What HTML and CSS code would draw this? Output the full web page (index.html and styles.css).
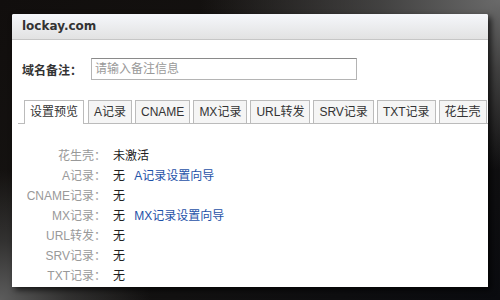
FILE: index.html
```html
<!DOCTYPE html>
<html lang="zh-CN">
  <head>
    <meta charset="UTF-8" />
    <title>lockay.com</title>
    <link rel="stylesheet" href="styles.css">
  </head>
  <body>
    <div class="dialog">
      <div class="dialog-title">lockay.com</div>

      <div class="dialog-body">
        <div class="form-row">
          <label for="remark">域名备注：</label>
          <input type="text" id="remark" placeholder="请输入备注信息" />
        </div>

        <!-- record tabs -->
        <ul class="tabs">
          <li class="active">设置预览</li>
          <li>A记录</li>
          <li>CNAME</li>
          <li>MX记录</li>
          <li>URL转发</li>
          <li>SRV记录</li>
          <li>TXT记录</li>
          <li>花生壳</li>
        </ul>

        <dl class="preview">
          <dt>花生壳：</dt>
          <dd>未激活</dd>
          <dt>A记录：</dt>
          <dd>无 <a href="#">A记录设置向导</a></dd>
          <dt>CNAME记录：</dt>
          <dd>无</dd>
          <dt>MX记录：</dt>
          <dd>无 <a href="#">MX记录设置向导</a></dd>
          <dt>URL转发：</dt>
          <dd>无</dd>
          <dt>SRV记录：</dt>
          <dd>无</dd>
          <dt>TXT记录：</dt>
          <dd>无</dd>
        </dl>
      </div>
    </div>
  </body>
</html>
```

FILE: styles.css
```css
html,
body {
  height: 100%;
}
body {
  margin: 0;
  overflow: hidden;
  font-family: "Liberation Sans", "Noto Sans CJK SC", sans-serif;
  font-size: 12px;
  color: #333;
  background:
    radial-gradient(ellipse 300px 170px at 100% 0%, #6a6a6a 0%, rgba(85, 85, 85, 0.7) 40%, rgba(40, 40, 40, 0) 100%),
    radial-gradient(ellipse 150px 130px at 0% 100%, #5c5c5c 0%, rgba(70, 70, 70, 0.6) 45%, rgba(30, 30, 30, 0) 100%),
    linear-gradient(to bottom right, #110e0d 0%, #161412 50%, #0a0b0f 100%);
}

.dialog {
  margin: 14px 0 0 12px;
  width: 476px;
  height: 273px;
  background: #fff;
  border-radius: 2px 2px 0 0;
  box-shadow: 3px 3px 6px rgba(0, 0, 0, 0.7);
  overflow: hidden;
}
.dialog-title {
  height: 25px;
  line-height: 25px;
  padding-left: 10px;
  font-family: "DejaVu Sans", sans-serif;
  font-weight: bold;
  font-size: 12px;
  color: #333;
  background: linear-gradient(#f5f7fb, #e2e2e2);
  border-bottom: 1px solid #c6c6c6;
}

.dialog-body {
  padding: 18px 0 0 6px;
}

.form-row {
  display: flex;
  align-items: center;
  padding-left: 4px;
}
.form-row label {
  width: 69px;
  font-weight: bold;
  color: #333;
}
.form-row input {
  box-sizing: border-box;
  width: 266px;
  height: 22px;
  padding: 0 3px;
  border: 1px solid #b4b4b4;
  border-top-color: #8a8a8a;
  font-family: inherit;
  font-size: 12px;
  outline: none;
}
.form-row input::placeholder {
  color: #999;
}

.tabs {
  display: flex;
  list-style: none;
  margin: 20px 0 0;
  padding: 0 0 0 6px;
  border-bottom: 1px solid #bbb;
}
.tabs li {
  height: 22px;
  line-height: 22px;
  padding: 0 5px;
  margin-right: 3px;
  margin-bottom: -1px;
  border: 1px solid #bbb;
  border-bottom: none;
  background: #f5f5f5;
  color: #333;
  white-space: nowrap;
}
.tabs li.active {
  background: #fff;
  height: 23px;
  margin-right: 4px;
}

.preview {
  display: grid;
  grid-template-columns: 88px auto;
  column-gap: 7px;
  margin: 22px 0 0;
  line-height: 20px;
}
.preview dt {
  text-align: right;
  color: #999;
}
.preview dd {
  margin: 0;
  color: #222;
}
.preview a {
  margin-left: 6px;
  color: #1f52a8;
  text-decoration: none;
}
```
